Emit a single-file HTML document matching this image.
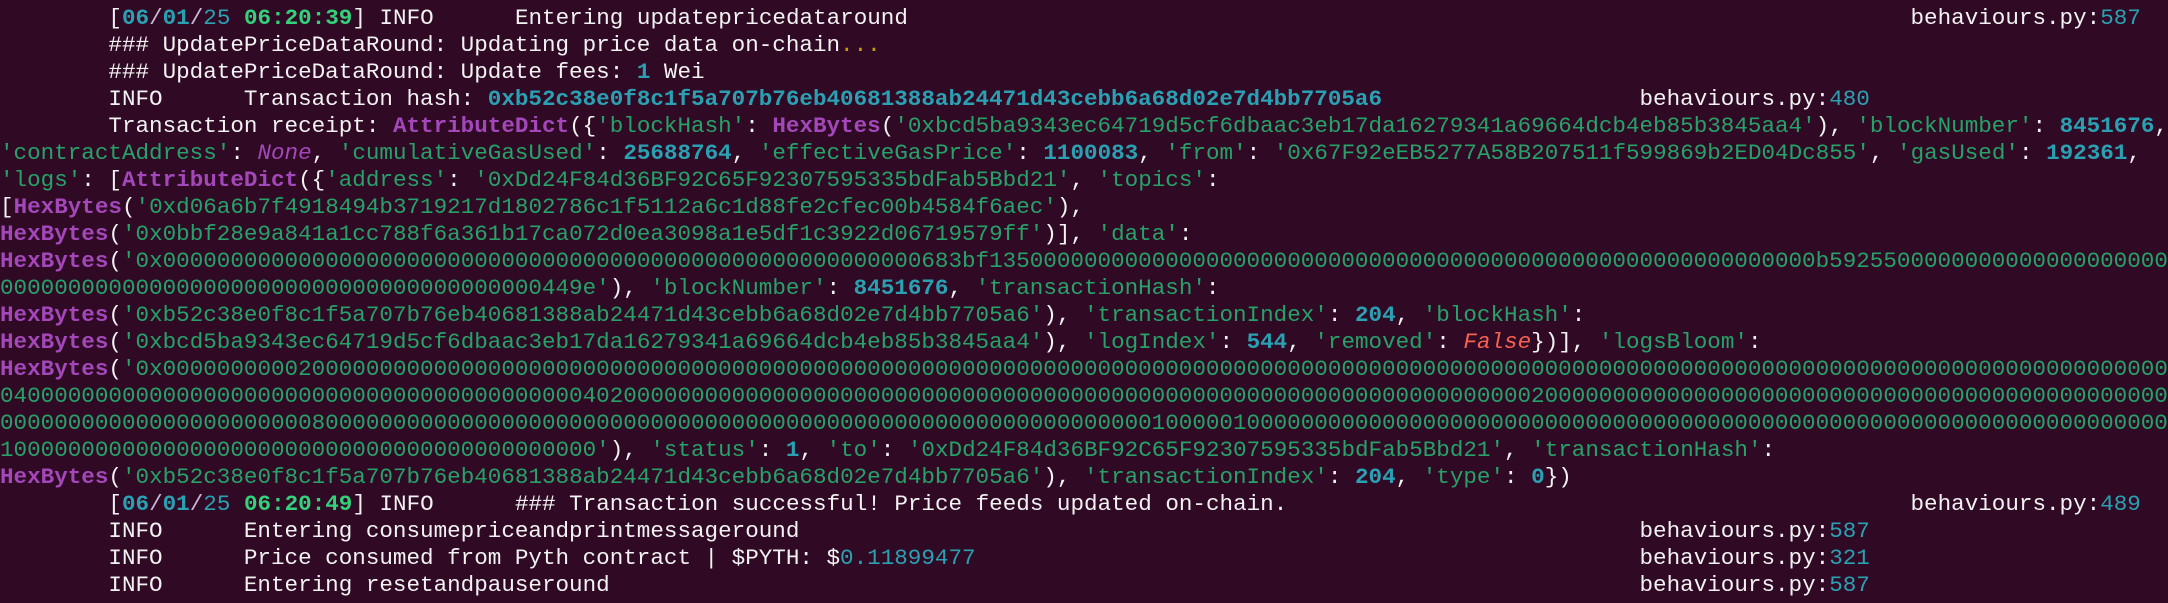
<!DOCTYPE html>
<html><head><meta charset="utf-8">
<style>
html,body{margin:0;padding:0;background:#300a24;}
body{width:2168px;height:603px;overflow:hidden;position:relative;}
.t{position:absolute;left:0;top:4.5px;width:2168px;font-family:"Liberation Mono","DejaVu Sans Mono",monospace;font-size:22.58px;line-height:27px;color:#f2f2f2;}
.l{height:27px;overflow:hidden;white-space:pre;position:relative;}
.b{position:absolute;top:0}
.b1{left:1910.5px}
.b2{left:1639.5px}
.g{color:#26a269}
.c{color:#2aa1b3;font-weight:bold}
.cn{color:#2aa1b3}
.p{color:#a347ba;font-weight:bold}
.pi{color:#a347ba;font-style:italic}
.r{color:#f66151;font-style:italic}
.tm{color:#33d17a;font-weight:bold}
.y{color:#c4a000}
.s{color:#c7b8d8}
</style></head><body>
<div class="t"><div class="l">        [<span class="c">06</span><span class="s">/</span><span class="c">01</span><span class="s">/</span><span class="cn">25</span> <span class="tm">06:20:39</span>] INFO      Entering updatepricedataround<span class="b b1">behaviours.py:<span class="cn">587</span></span></div><div class="l">        ### UpdatePriceDataRound: Updating price data on-chain<span class="y">...</span></div><div class="l">        ### UpdatePriceDataRound: Update fees: <span class="c">1</span> Wei</div><div class="l">        INFO      Transaction hash: <span class="c">0xb52c38e0f8c1f5a707b76eb40681388ab24471d43cebb6a68d02e7d4bb7705a6</span><span class="b b2">behaviours.py:<span class="cn">480</span></span></div><div class="l">        Transaction receipt: <span class="p">AttributeDict</span>({<span class="g">'blockHash'</span>: <span class="p">HexBytes</span>(<span class="g">'0xbcd5ba9343ec64719d5cf6dbaac3eb17da16279341a69664dcb4eb85b3845aa4'</span>), <span class="g">'blockNumber'</span>: <span class="c">8451676</span>,</div><div class="l"><span class="g">'contractAddress'</span>: <span class="pi">None</span>, <span class="g">'cumulativeGasUsed'</span>: <span class="c">25688764</span>, <span class="g">'effectiveGasPrice'</span>: <span class="c">1100083</span>, <span class="g">'from'</span>: <span class="g">'0x67F92eEB5277A58B207511f599869b2ED04Dc855'</span>, <span class="g">'gasUsed'</span>: <span class="c">192361</span>,</div><div class="l"><span class="g">'logs'</span>: [<span class="p">AttributeDict</span>({<span class="g">'address'</span>: <span class="g">'0xDd24F84d36BF92C65F92307595335bdFab5Bbd21'</span>, <span class="g">'topics'</span>:</div><div class="l">[<span class="p">HexBytes</span>(<span class="g">'0xd06a6b7f4918494b3719217d1802786c1f5112a6c1d88fe2cfec00b4584f6aec'</span>),</div><div class="l"><span class="p">HexBytes</span>(<span class="g">'0x0bbf28e9a841a1cc788f6a361b17ca072d0ea3098a1e5df1c3922d06719579ff'</span>)], <span class="g">'data'</span>:</div><div class="l"><span class="p">HexBytes</span>(<span class="g">'0x00000000000000000000000000000000000000000000000000000000683bf1350000000000000000000000000000000000000000000000000000000000b5925500000000000000000000</span></div><div class="l"><span class="g">0000000000000000000000000000000000000000449e'</span>), <span class="g">'blockNumber'</span>: <span class="c">8451676</span>, <span class="g">'transactionHash'</span>:</div><div class="l"><span class="p">HexBytes</span>(<span class="g">'0xb52c38e0f8c1f5a707b76eb40681388ab24471d43cebb6a68d02e7d4bb7705a6'</span>), <span class="g">'transactionIndex'</span>: <span class="c">204</span>, <span class="g">'blockHash'</span>:</div><div class="l"><span class="p">HexBytes</span>(<span class="g">'0xbcd5ba9343ec64719d5cf6dbaac3eb17da16279341a69664dcb4eb85b3845aa4'</span>), <span class="g">'logIndex'</span>: <span class="c">544</span>, <span class="g">'removed'</span>: <span class="r">False</span>})], <span class="g">'logsBloom'</span>:</div><div class="l"><span class="p">HexBytes</span>(<span class="g">'0x00000000002000000000000000000000000000000000000000000000000000000000000000000000000000000000000000000000000000000000000000000000000000000000000000000</span></div><div class="l"><span class="g">0400000000000000000000000000000000000000000402000000000000000000000000000000000000000000000000000000000000000000020000000000000000000000000000000000000000000000</span></div><div class="l"><span class="g">0000000000000000000000080000000000000000000000000000000000000000000000000000000000000100000100000000000000000000000000000000000000000000000000000000000000000000</span></div><div class="l"><span class="g">10000000000000000000000000000000000000000000'</span>), <span class="g">'status'</span>: <span class="c">1</span>, <span class="g">'to'</span>: <span class="g">'0xDd24F84d36BF92C65F92307595335bdFab5Bbd21'</span>, <span class="g">'transactionHash'</span>:</div><div class="l"><span class="p">HexBytes</span>(<span class="g">'0xb52c38e0f8c1f5a707b76eb40681388ab24471d43cebb6a68d02e7d4bb7705a6'</span>), <span class="g">'transactionIndex'</span>: <span class="c">204</span>, <span class="g">'type'</span>: <span class="c">0</span>})</div><div class="l">        [<span class="c">06</span><span class="s">/</span><span class="c">01</span><span class="s">/</span><span class="cn">25</span> <span class="tm">06:20:49</span>] INFO      ### Transaction successful! Price feeds updated on-chain.<span class="b b1">behaviours.py:<span class="cn">489</span></span></div><div class="l">        INFO      Entering consumepriceandprintmessageround<span class="b b2">behaviours.py:<span class="cn">587</span></span></div><div class="l">        INFO      Price consumed from Pyth contract | $PYTH: $<span class="cn">0.11899477</span><span class="b b2">behaviours.py:<span class="cn">321</span></span></div><div class="l">        INFO      Entering resetandpauseround<span class="b b2">behaviours.py:<span class="cn">587</span></span></div></div>
</body></html>
